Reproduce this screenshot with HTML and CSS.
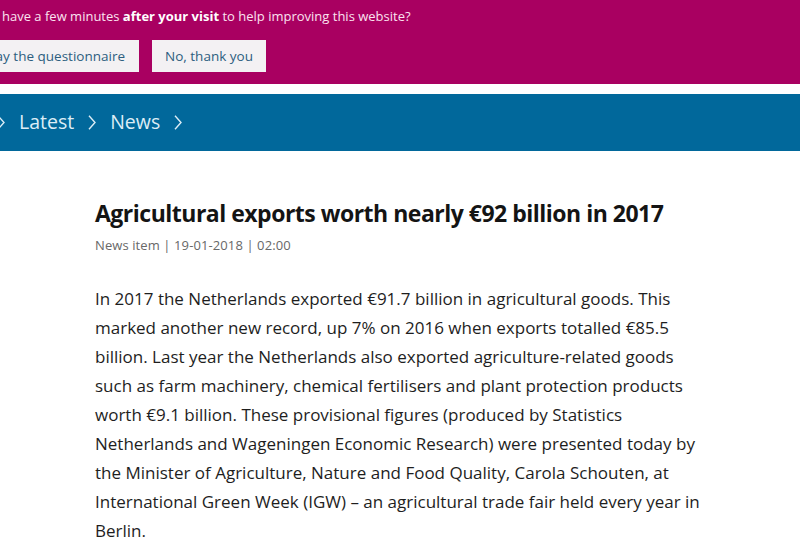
FILE: index.html
```html
<!DOCTYPE html>
<html lang="en">
<head>
<meta charset="utf-8">
<title>Agricultural exports worth nearly €92 billion in 2017</title>
<link rel="stylesheet" href="styles.css">
</head>
<body>
<div class="survey">
  <p class="survey-text">have a few minutes <strong>after your visit</strong> to help improving this website?</p>
  <div class="survey-buttons">
    <a class="btn btn-first" href="#">Play the questionnaire</a>
    <a class="btn" href="#">No, thank you</a>
  </div>
</div>
<nav class="crumbs">
  <svg class="chev" width="8" height="15" viewBox="0 0 8 15" aria-hidden="true"><polyline points="1,0.8 7,7.5 1,14.2"/></svg>
  <a href="#">Latest</a>
  <svg class="chev" width="8" height="15" viewBox="0 0 8 15" aria-hidden="true"><polyline points="1,0.8 7,7.5 1,14.2"/></svg>
  <a href="#">News</a>
  <svg class="chev" width="8" height="15" viewBox="0 0 8 15" aria-hidden="true"><polyline points="1,0.8 7,7.5 1,14.2"/></svg>
</nav>
<main class="article">
  <h1>Agricultural exports worth nearly €92 billion in 2017</h1>
  <p class="meta">News item | 19-01-2018 | 02:00</p>
  <p class="lead">In 2017 the Netherlands exported €91.7 billion in agricultural goods. This<br>
marked another new record, up 7% on 2016 when exports totalled €85.5<br>
billion. Last year the Netherlands also exported agriculture-related goods<br>
such as farm machinery, chemical fertilisers and plant protection products<br>
worth €9.1 billion. These provisional figures (produced by Statistics<br>
Netherlands and Wageningen Economic Research) were presented today by<br>
the Minister of Agriculture, Nature and Food Quality, Carola Schouten, at<br>
International Green Week (IGW) – an agricultural trade fair held every year in<br>
Berlin.</p>
</main>
</body>
</html>
```

FILE: styles.css
```css
html, body {
  margin: 0;
  padding: 0;
  background: #fff;
  overflow: hidden;
}
body {
  font-family: "Open Sans", "Noto Sans", sans-serif;
  color: #1a1a1a;
}
.survey {
  background: #a90061;
  height: 84px;
  overflow: hidden;
  padding-top: 6px;
  box-sizing: border-box;
}
.survey-text {
  margin: 0 0 0 2px;
  font-size: 13px;
  line-height: 20px;
  color: #fbe3f0;
  white-space: nowrap;
}
.survey-text strong {
  font-weight: 700;
  color: #fff;
}
.survey-buttons {
  display: flex;
  gap: 13px;
  margin-top: 14px;
  margin-left: -61px;
}
.btn {
  display: block;
  background: #f3f1f3;
  color: #2d5e7f;
  text-decoration: none;
  font-size: 13.5px;
  line-height: 32px;
  height: 32px;
  padding: 0 13px;
  white-space: nowrap;
}
.btn-first {
  width: 200px;
  box-sizing: border-box;
  text-align: right;
  padding-right: 14px;
}
.crumbs {
  margin-top: 10px;
  background: #01689b;
  height: 57px;
  display: flex;
  align-items: center;
  gap: 14px;
  margin-left: -3px;
  font-size: 19.5px;
}
.crumbs a {
  color: #dcedf6;
  text-decoration: none;
  line-height: 24px;
  margin-top: -1px;
}
.chev {
  fill: none;
  stroke: #dcedf6;
  stroke-width: 1.4;
  flex: none;
}
.article {
  padding: 47px 0 0 95px;
  width: 680px;
}
.article h1 {
  margin: 0;
  font-size: 23px;
  line-height: 30px;
  font-weight: 700;
  letter-spacing: -0.5px;
  color: #141414;
}
.meta {
  margin: 8px 0 0;
  font-size: 13px;
  line-height: 18px;
  letter-spacing: 0.1px;
  color: #686868;
}
.lead {
  margin: 30px 0 0;
  font-size: 17px;
  line-height: 29px;
  color: #1e1e1e;
  white-space: nowrap;
}
```
